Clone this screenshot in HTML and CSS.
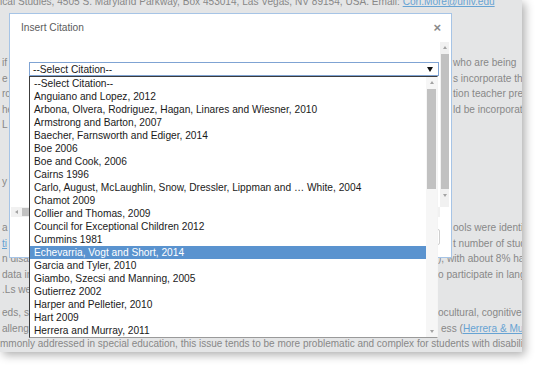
FILE: index.html
```html
<!DOCTYPE html>
<html>
<head>
<meta charset="utf-8">
<link rel="stylesheet" href="styles.css">
</head>
<body>
<div class="shot">
  <div class="page">
    <div class="ln top">ical Studies, 4505 S. Maryland Parkway, Box 453014, Las Vegas, NV 89154, USA. Email: <span class="lk">Cori.More@unlv.edu</span></div>
    <div class="para p2">
      <div class="ln"><span class="l">if</span><span class="r">who are being</span></div>
      <div class="ln"><span class="l">e</span><span class="r">s incorporate the</span></div>
      <div class="ln"><span class="l">rc</span><span class="r">tion teacher prep</span></div>
      <div class="ln"><span class="l">he</span><span class="r">ld be incorporated</span></div>
      <div class="ln"><span class="l">L</span><span class="r"></span></div>
    </div>
    <div class="para p3">
      <div class="ln"><span class="l">y</span><span class="r"></span></div>
    </div>
    <div class="para p4">
      <div class="ln"><span class="l">a</span><span class="r">ools were identified</span></div>
      <div class="ln"><span class="l"><span class="lk">ti</span></span><span class="r">t number of students</span></div>
      <div class="ln low"><span class="l">n disab</span><span class="r">), with about 8% having</span></div>
      <div class="ln low"><span class="l">data in</span><span class="r">o participate in language</span></div>
      <div class="ln low"><span class="l">.Ls we</span><span class="r"></span></div>
    </div>
    <div class="para p5">
      <div class="ln low"><span class="l">eds, s</span><span class="r">ocultural, cognitive, and</span></div>
      <div class="ln low"><span class="l">alleng</span><span class="r r2">ess (<span class="lk">Herrera &amp; Murray</span></span></div>
      <div class="ln bottom">mmonly addressed in special education, this issue tends to be more problematic and complex for students with disabilities</div>
    </div>
  </div>

  <div class="modal">
    <div class="mhead">
      <span class="mtitle">Insert Citation</span>
      <span class="mclose">&#215;</span>
    </div>
    <div class="mbody">
      <div class="mcontent">
        <div class="select">
          <span>--Select Citation--</span>
          <span class="caret"></span>
        </div>
      </div>
      <div class="vbar">
        <span class="arr up"></span>
        <span class="thumb"></span>
        <span class="arr down"></span>
      </div>
      <div class="hbar">
        <span class="arr left"></span>
        <span class="hthumb"></span>
      </div>
      <div class="corner"></div>
    </div>
    <div class="mfoot">
      <span class="fbox"></span>
    </div>
  </div>

  <div class="dropdown">
    <ul class="opts">
      <li>--Select Citation--</li>
      <li>Anguiano and Lopez, 2012</li>
      <li>Arbona, Olvera, Rodriguez, Hagan, Linares and Wiesner, 2010</li>
      <li>Armstrong and Barton, 2007</li>
      <li>Baecher, Farnsworth and Ediger, 2014</li>
      <li>Boe 2006</li>
      <li>Boe and Cook, 2006</li>
      <li>Cairns 1996</li>
      <li>Carlo, August, McLaughlin, Snow, Dressler, Lippman and … White, 2004</li>
      <li>Chamot 2009</li>
      <li>Collier and Thomas, 2009</li>
      <li>Council for Exceptional Children 2012</li>
      <li>Cummins 1981</li>
      <li class="sel">Echevarria, Vogt and Short, 2014</li>
      <li>Garcia and Tyler, 2010</li>
      <li>Giambo, Szecsi and Manning, 2005</li>
      <li>Gutierrez 2002</li>
      <li>Harper and Pelletier, 2010</li>
      <li>Hart 2009</li>
      <li>Herrera and Murray, 2011</li>
    </ul>
    <div class="lbar">
      <span class="arr up"></span>
      <span class="lthumb"></span>
      <span class="ltrack"></span>
      <span class="arr down"></span>
    </div>
  </div>
</div>
</body>
</html>
```

FILE: styles.css
```css
html, body {
  margin: 0;
  padding: 0;
  background: #ffffff;
}

body {
  font-family: "Liberation Sans", Arial, sans-serif;
  width: 535px;
  height: 366px;
  overflow: hidden;
}

.shot {
  position: relative;
  width: 522px;
  height: 352px;
  overflow: hidden;
  background: #e4e5e6;
  box-shadow: 3px 3px 9px rgba(0, 0, 0, 0.32);
}

/* ---------- background page ---------- */
.page {
  color: #888888;
  font-size: 10.1px;
  line-height: 15.5px;
}

.ln {
  display: grid;
  grid-template-columns: 452px 1fr;
  height: 15.5px;
  white-space: nowrap;
  overflow: hidden;
}

.ln.low {
  grid-template-columns: 437px 1fr;
}

.ln.top {
  display: block;
  margin-top: -6px;
}

.ln.bottom {
  display: block;
  font-size: 10px;
}

.l, .r {
  overflow: hidden;
}

.l {
  padding-left: 2px;
}

.r {
  padding-left: 1px;
}

.r2 {
  padding-left: 4px;
}

.lk {
  color: #67a3d3;
  text-decoration: underline;
}

.p2 { margin-top: 45.5px; }
.p3 { margin-top: 41.5px; }
.p4 { margin-top: 30.5px; }
.p5 { margin-top: 7.5px; }

/* ---------- modal ---------- */
.modal {
  position: absolute;
  left: 9px;
  top: 13px;
  width: 441px;
  height: 243px;
  border: 1px solid #a6c4e6;
  background: #ffffff;
  display: flex;
  flex-direction: column;
}

.mhead {
  height: 28px;
  display: flex;
  align-items: center;
  justify-content: space-between;
  padding: 0 10px 0 11px;
}

.mtitle {
  font-size: 10.2px;
  color: #5c5c5c;
  margin-top: -1px;
}

.mclose {
  font-size: 13px;
  font-weight: bold;
  color: #8a8a8a;
  line-height: 1;
  margin-top: -1px;
}

.mbody {
  height: 175px;
  margin: 0 2px 0 1px;
  display: grid;
  grid-template-columns: 1fr 9px;
  grid-template-rows: 1fr 10px;
}

.mcontent {
  padding: 20px 0 0 18px;
}

.select {
  width: 405px;
  height: 12px;
  border: 1px solid #7fa3d3;
  display: flex;
  align-items: center;
  justify-content: space-between;
  padding: 0 0 0 3px;
  font-size: 10.2px;
  color: #1a1a1a;
}

.caret {
  width: 0;
  height: 0;
  border-left: 3px solid transparent;
  border-right: 3px solid transparent;
  border-top: 5px solid #111;
  margin-right: 5px;
}

.vbar {
  background: #f1f1f1;
  display: flex;
  flex-direction: column;
  align-items: center;
}

.thumb {
  width: 8px;
  height: 135px;
  background: #c1c1c1;
  margin: 1px 0;
}

.hbar {
  background: #f1f1f1;
  display: flex;
  align-items: center;
}

.hthumb {
  width: 300px;
  height: 8px;
  background: #c1c1c1;
  margin-left: 2px;
}

.corner {
  background: #ffffff;
}

.arr {
  width: 0;
  height: 0;
  flex: none;
}

.vbar .arr, .lbar .arr {
  margin: 4px 0;
}

.arr.up {
  border-left: 2.5px solid transparent;
  border-right: 2.5px solid transparent;
  border-bottom: 3px solid #a3a3a3;
}

.arr.down {
  border-left: 2.5px solid transparent;
  border-right: 2.5px solid transparent;
  border-top: 3px solid #a3a3a3;
}

.arr.left {
  border-top: 2.5px solid transparent;
  border-bottom: 2.5px solid transparent;
  border-right: 3px solid #a3a3a3;
  margin: 0 2px 0 4px;
}

.mfoot {
  flex: 1;
  display: flex;
  justify-content: flex-end;
  align-items: flex-start;
  padding: 12px 11px 0 0;
}

.fbox {
  width: 80px;
  height: 14px;
  border: 1px solid #cfcfcf;
  border-radius: 2px;
}

/* ---------- dropdown list ---------- */
.dropdown {
  position: absolute;
  left: 29px;
  top: 76px;
  width: 407px;
  height: 260px;
  border: 1px solid #3c3c3c;
  border-right-color: #f4f4f4;
  border-bottom-color: #9a9a9a;
  background: #ffffff;
  display: flex;
}

.opts {
  list-style: none;
  margin: 0;
  padding: 0;
  flex: 1;
  overflow: hidden;
  font-size: 10.2px;
  color: #1a1a1a;
}

.opts li {
  height: 13px;
  line-height: 13px;
  padding-left: 4px;
  white-space: nowrap;
}

.opts li.sel {
  background: #5a93cf;
  color: #ffffff;
}

.lbar {
  width: 11px;
  background: #f6f6f6;
  display: flex;
  flex-direction: column;
  align-items: center;
}

.lthumb {
  width: 9px;
  height: 100px;
  background: #c1c1c1;
  margin-top: 1px;
}

.ltrack {
  flex: 1;
}
```
